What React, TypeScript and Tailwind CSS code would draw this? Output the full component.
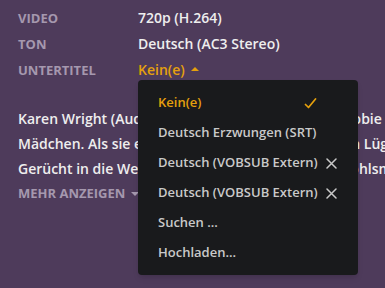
import { useState } from "react";

const details = [
  { label: "Video", value: "720p (H.264)" },
  { label: "Ton", value: "Deutsch (AC3 Stereo)" },
];

const subtitles = [
  { name: "Kein(e)", selected: true },
  { name: "Deutsch Erzwungen (SRT)" },
  { name: "Deutsch (VOBSUB Extern)", removable: true },
  { name: "Deutsch (VOBSUB Extern)", removable: true },
  { name: "Suchen ..." },
  { name: "Hochladen..." },
];

export default function App() {
  const [open, setOpen] = useState(true);

  return (
    <div className="relative w-[385px] h-[288px] overflow-hidden bg-[#4e3b5b] font-['Open_Sans',sans-serif] px-[18px] pt-[5px]">
      {/* Media details */}
      {details.map((d) => (
        <div key={d.label} className="flex items-baseline leading-[25px] whitespace-nowrap">
          <span className="w-[120px] text-[13px] font-bold uppercase text-[#a598ae]">{d.label}</span>
          <span className="text-[14px] font-semibold text-[#eeeeee]">{d.value}</span>
        </div>
      ))}
      <div className="flex items-baseline leading-[25px] whitespace-nowrap">
        <span className="w-[120px] text-[13px] font-bold uppercase text-[#a598ae]">Untertitel</span>
        <button
          onClick={() => setOpen(!open)}
          className="flex items-baseline text-[14px] font-semibold text-[#e5a00d]"
        >
          Kein(e)
          <span className="ml-[6px] inline-block w-0 h-0 border-x-[4px] border-x-transparent border-b-[4px] border-b-[#e5a00d] -translate-y-[4px]" />
        </button>
      </div>

      {/* Summary (clipped at the right edge) */}
      <div className="mt-[23px] w-[600px] text-[14px] font-semibold leading-[25px] text-[#eeeeee] whitespace-nowrap">
        <p>Karen Wright (Audrey Hepburn) und Dr. Martha Dobie (Shirley</p>
        <p>Mädchen. Als sie eine Schülerin rügen, setzt sie ein Lügenmärchen</p>
        <p>Gerücht in die Welt, dass die beiden Frauen als Wohlsm</p>
      </div>
      <div className="flex items-center leading-[25px] text-[13px] font-bold uppercase text-[#a598ae]">
        Mehr anzeigen
        <span className="ml-[6px] inline-block w-0 h-0 border-x-[4px] border-x-transparent border-t-[4px] border-t-[#a598ae]" />
      </div>

      {/* Subtitle dropdown */}
      {open && (
        <div className="absolute left-[138px] top-[80px] w-[220px] h-[195px] rounded-[4px] bg-[#191a1c] pt-2 pb-[7px] shadow-md">
          {subtitles.map((s, i) => (
            <div
              key={i}
              className={`flex items-center h-[30px] pl-5 pr-[21px] text-[13px] font-semibold whitespace-nowrap ${
                s.selected ? "text-[#e5a00d]" : "text-[#c9c9c9]"
              }`}
            >
              <span>{s.name}</span>
              {s.selected && (
                <svg className="ml-auto mr-[20px]" width="13" height="11" viewBox="0 0 13 11" fill="none">
                  <path d="M1.5 6.5 L4.5 9.5 L11.5 1" stroke="#e5a00d" strokeWidth="1.7" strokeLinecap="round" strokeLinejoin="round" />
                </svg>
              )}
              {s.removable && (
                <svg className="ml-auto" width="11" height="11" viewBox="0 0 11 11" fill="none">
                  <path d="M1 1 L10 10 M10 1 L1 10" stroke="#c9c9c9" strokeWidth="1.5" strokeLinecap="round" />
                </svg>
              )}
            </div>
          ))}
        </div>
      )}
    </div>
  );
}
